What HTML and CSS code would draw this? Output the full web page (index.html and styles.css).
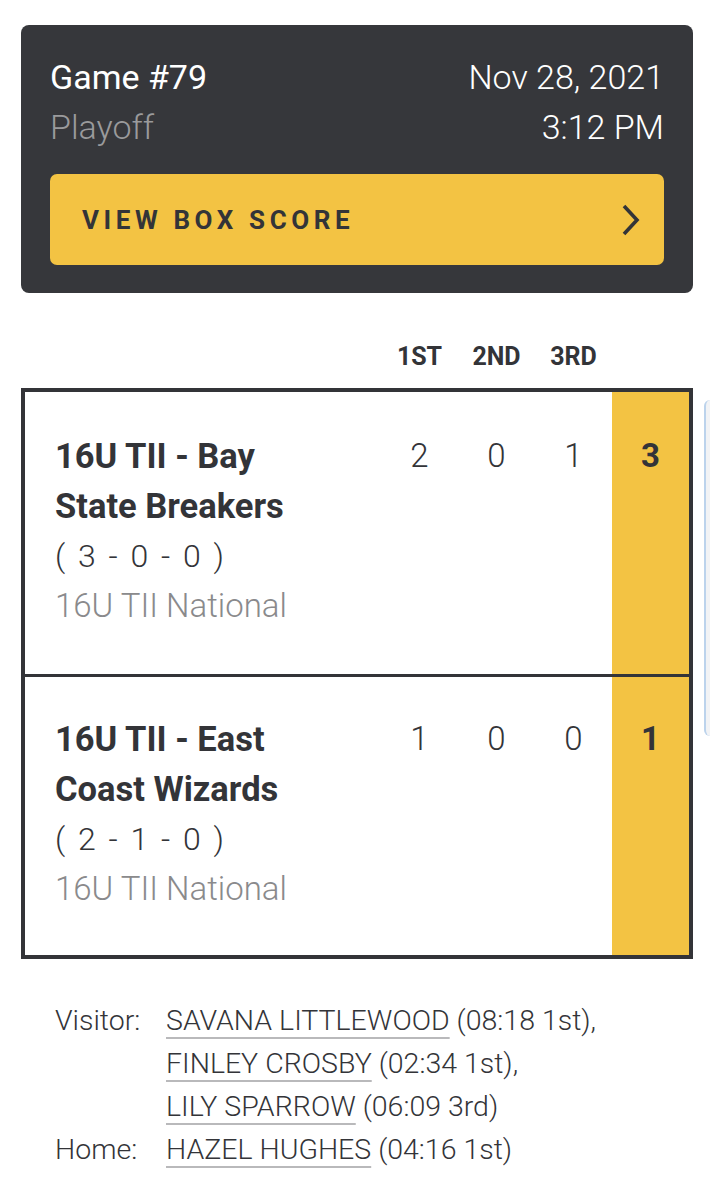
FILE: index.html
```html
<!DOCTYPE html>
<html>
<head>
<meta charset="utf-8">
<link rel="stylesheet" href="styles.css">
</head>
<body>
<div class="page">
  <section class="game-card">
    <div class="game-head">
      <div class="game-left">
        <div class="game-title">Game #79</div>
        <div class="game-type">Playoff</div>
      </div>
      <div class="game-right">
        <div>Nov 28, 2021</div>
        <div>3:12 PM</div>
      </div>
    </div>
    <a class="box-btn" href="#">
      <span class="box-label">VIEW BOX SCORE</span>
      <svg class="chev" width="22" height="34" viewBox="0 0 22 34"><path d="M4 3 L17 17 L4 31" fill="none" stroke="#333438" stroke-width="3.6"/></svg>
    </a>
  </section>

  <div class="periods">
    <span></span><span class="ph">1ST</span><span class="ph">2ND</span><span class="ph">3RD</span><span></span>
  </div>

  <div class="score-table">
    <div class="team-row">
      <div class="team-info">
        <div class="team-name">16U TII - Bay State Breakers</div>
        <div class="team-record">( 3 - 0 - 0 )</div>
        <div class="team-div">16U TII National</div>
      </div>
      <div class="score">2</div>
      <div class="score">0</div>
      <div class="score">1</div>
      <div class="total">3</div>
    </div>
    <div class="team-row second">
      <div class="team-info">
        <div class="team-name">16U TII - East Coast Wizards</div>
        <div class="team-record">( 2 - 1 - 0 )</div>
        <div class="team-div">16U TII National</div>
      </div>
      <div class="score">1</div>
      <div class="score">0</div>
      <div class="score">0</div>
      <div class="total">1</div>
    </div>
  </div>

  <div class="goals">
    <div class="g-label">Visitor:</div>
    <div class="g-list">
      <div><a href="#">SAVANA LITTLEWOOD</a> (08:18 1st),</div>
      <div><a href="#">FINLEY CROSBY</a> (02:34 1st),</div>
      <div><a href="#">LILY SPARROW</a> (06:09 3rd)</div>
    </div>
    <div class="g-label">Home:</div>
    <div class="g-list">
      <div><a href="#">HAZEL HUGHES</a> (04:16 1st)</div>
    </div>
  </div>

  <div class="edge-tip"></div>
</div>
</body>
</html>
```

FILE: styles.css
```css
* { box-sizing: border-box; }
html, body { margin: 0; padding: 0; background: #ffffff; }
body {
  font-family: Roboto, "Noto Sans", sans-serif;
  color: #333438;
}
.page {
  position: relative;
  width: 710px;
  height: 1200px;
  overflow: hidden;
  padding: 25px 17px 0 21px;
}
.game-card {
  background: #36373b;
  border-radius: 8px;
  padding: 27px 29px 28px 29px;
}
.game-head {
  display: flex;
  justify-content: space-between;
  font-size: 34px;
  line-height: 50px;
  font-weight: 300;
}
.game-title { color: #ffffff; font-weight: 400; }
.game-type { color: #9a9a9c; }
.game-right { text-align: right; color: #ffffff; }
.box-btn {
  margin-top: 22px;
  height: 91px;
  background: #f3c343;
  border-radius: 7px;
  display: flex;
  align-items: center;
  justify-content: space-between;
  padding: 0 22px 0 32px;
  text-decoration: none;
}
.box-label {
  font-size: 26px;
  font-weight: 700;
  letter-spacing: 4.6px;
  color: #333438;
}
.chev { display: block; }

.periods {
  display: grid;
  grid-template-columns: 1fr 77px 77px 77px 81px;
  padding-left: 4px;
  margin-top: 49px;
  height: 30px;
  line-height: 30px;
}
.ph {
  text-align: center;
  font-size: 25px;
  font-weight: 700;
  color: #333438;
}
.score-table {
  margin-top: 16px;
  border: 4px solid #333438;
}
.team-row {
  display: grid;
  grid-template-columns: 1fr 77px 77px 77px 77px;
}
.team-row.second { border-top: 3px solid #333438; }
.team-info {
  padding: 39px 0 43px 30px;
  line-height: 50px;
}
.team-row.second .team-info { padding-top: 37px; padding-bottom: 41px; }
.team-name {
  font-size: 34.5px;
  font-weight: 700;
  max-width: 262px;
}
.team-record { font-size: 32px; font-weight: 300; word-spacing: 5px; }
.team-div { font-size: 33px; font-weight: 300; color: #8a8a8c; }
.score, .total {
  text-align: center;
  font-size: 33px;
  line-height: 50px;
  font-weight: 300;
  padding-top: 39px;
}
.team-row.second .score, .team-row.second .total { padding-top: 37px; }
.total {
  background: #f3c343;
  font-weight: 700;
}
.goals {
  display: grid;
  grid-template-columns: 111px auto;
  margin-top: 40px;
  padding-left: 34px;
  font-size: 28.5px;
  font-weight: 300;
  line-height: 43px;
  color: #333438;
}
.goals a {
  color: #333438;
  text-decoration: underline;
  text-decoration-color: #b9b9bb;
  text-decoration-thickness: 2px;
  text-underline-offset: 7px;
}
.edge-tip {
  position: absolute;
  right: -10px;
  top: 400px;
  width: 16px;
  height: 336px;
  background: #f2f3f5;
  border-left: 2px solid #bcd3ec;
  border-radius: 6px;
}
```
